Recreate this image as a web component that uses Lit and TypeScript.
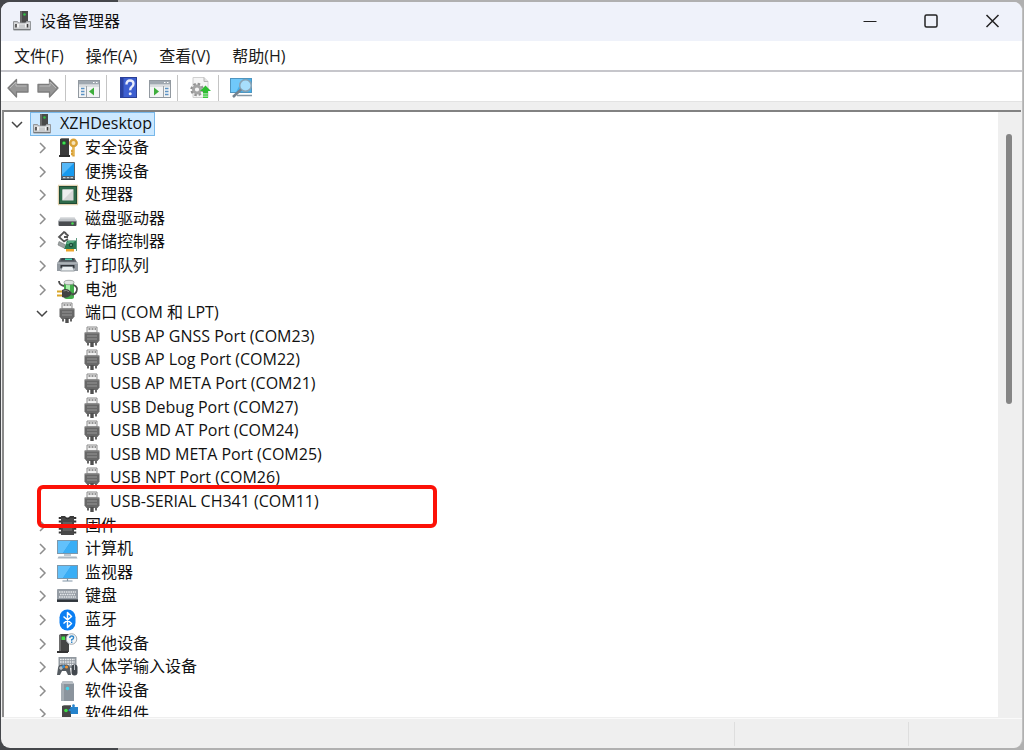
import { LitElement, html, css, svg, SVGTemplateResult } from "lit";
import { customElement, property } from "lit/decorators.js";
import { classMap } from "lit/directives/class-map.js";

const hostBox = svg`
  <rect x="8" y="0" width="8" height="12" fill="#4a4a4a"/><path d="M8 0h2v12H8z" fill="#6a6a6a"/>
  <circle cx="12.500" cy="3.500" r="1.300" fill="#2fc043"/>
  <path d="M1.500 10.500h4l1 1.500h7l1-1.500h4v8.500h-17z" fill="#c9cbcd" stroke="#94979a" stroke-width="1"/>
  <path d="M2 18.500h16" stroke="#777a7d" stroke-width="1"/>
  <path d="M2 13h16" stroke="#e6e7e8" stroke-width="1"/>
  <rect x="3.500" y="13" width="3.500" height="3.500" fill="#f4f4f4"/><rect x="13" y="13" width="3.500" height="3.500" fill="#f4f4f4"/>
  <path d="M4 13v3.500M15.500 13v3.500" stroke="#3d3d3d" stroke-width="1.600"/>`;

const monitor = svg`
  <rect x=".5" y="1.500" width="20" height="13" fill="#2f9ee6" stroke="#7d97aa" stroke-width="1"/>
  <path d="M1 2h13L6 14H1z" fill="#62c1fb"/><path d="M14 2h6v12H6z" fill="#3aaef5"/>`;

const ICONS: Record<string, SVGTemplateResult> = {
  host: hostBox,
  security: svg`
    <path d="M3 1h9v17H3z" fill="#3b3b3b"/><path d="M3 1l1.500-1H12v1z" fill="#777"/>
    <rect x="5" y="3" width="4" height="4" fill="#235c2c"/><circle cx="7" cy="5" r="1.600" fill="#3fe352"/>
    <rect x="2" y="17" width="11" height="2" fill="#2f2f2f"/>
    <circle cx="16.500" cy="5" r="3.200" fill="#f5e3b8" stroke="#d9a136" stroke-width="2.400"/>
    <path d="M16.500 8v10.500M16.500 13H14M16.500 16H14" stroke="#d9a136" stroke-width="2.400"/>
    <path d="M17 9v8" stroke="#f3d184" stroke-width=".8"/>`,
  portable: svg`
    <rect x="4" y="0" width="14" height="18" rx="1" fill="#56626d"/>
    <rect x="5" y="1" width="12" height="13" fill="#169af0"/><path d="M5 1h12L5 13z" fill="#56b8f8"/>
    <path d="M6 15.700h2.500M9.800 15.700h2.500M13.500 15.700H16" stroke="#c7ced4" stroke-width="1.200"/><path d="M4 17.500h14" stroke="#333d47"/>`,
  cpu: svg`
    <rect x="1.500" y=".5" width="19" height="19" fill="none" stroke="#c6a765" stroke-width="1.500" stroke-dasharray="1 1"/>
    <rect x="2" y="1" width="18" height="18" fill="#2f6b4a"/><rect x="2.500" y="1.500" width="17" height="17" fill="none" stroke="#204b34"/>
    <rect x="5.500" y="4.500" width="11" height="11" fill="#d7d7d7"/><path d="M5.500 15.500v-11h11z" fill="#eee"/>`,
  disk: svg`
    <path d="M4 8h13l3 4H1z" fill="#bfc3c7"/><path d="M4 8h13l1 1.500H3z" fill="#dee0e2"/>
    <rect x="1.500" y="12" width="18" height="5" rx="1" fill="#494c50"/><path d="M1.500 12.500h18" stroke="#797d82"/>
    <circle cx="15.500" cy="14.500" r="1.300" fill="#45dc4d"/>`,
  storage: svg`
    <path d="M9 1L7 0 2 5l5 4.500L11 7M8 1l3.500 3" fill="none" stroke="#555" stroke-width="1.800"/><path d="M7 5h4" stroke="#555" stroke-width="2"/>
    <path d="M10 8.500h9v8.500H7z" fill="#2b7852"/><path d="M11 9h7l-3 3H9z" fill="#58aa81"/>
    <path d="M19.500 6v13" stroke="#5e9a80"/><path d="M2 9.500l6 3-1 3.500-6-3z" fill="#9da3a3" stroke="#707676" stroke-width=".6"/>
    <path d="M9 17h8v2.500H9z" fill="#eda62b"/><circle cx="14" cy="13" r="2.200" fill="#194c38"/><circle cx="14" cy="13" r=".8" fill="#bbe1cd"/>`,
  printer: svg`
    <path d="M3.500 2h14l3 5H.5z" fill="#62686f"/><path d="M5 2h11l1.500 2.500H3.500z" fill="#3b4148"/><path d="M8 3.300h7" stroke="#42d2ab" stroke-width="1.500"/>
    <path d="M0 6.500h21v8.500h-3.500v-2h-14v2H0z" fill="#939aa1"/><path d="M0 7h21" stroke="#c7ccd0"/>
    <rect x="3.500" y="9" width="14" height="3" fill="#303439"/><path d="M5.500 10.500h10l2 4.500h-14z" fill="#e9edf0" stroke="#6d767d" stroke-width=".7"/>`,
  battery: svg`
    <rect x="7" y="2" width="10" height="17" rx="2.500" fill="#44ad4c"/><path d="M9 3.500h4V15H9z" fill="#a8eeaa"/>
    <ellipse cx="12" cy="2.500" rx="5" ry="2.200" fill="#dfe3e1" stroke="#848a87" stroke-width=".7"/>
    <path d="M2 1q0 4 5 5M16.500 5q5 2 3 6.500-1 3-5 3" fill="none" stroke="#4b4b4b" stroke-width="1.800"/>
    <path d="M5 10q4-2 7 0l3 3-2 3q-4 3-8 1z" fill="#414141"/><path d="M6.500 11q3-1.500 5.500.8" stroke="#8a8a8a" fill="none"/>
    <path d="M0 11.500h5M0 15.500h5" stroke="#d9a628" stroke-width="1.800"/>`,
  port: svg`
    <path d="M5 0h10v6H5z" fill="#f0f0f0" stroke="#8c8c8c" stroke-width="1"/><path d="M6.500 2h2M9.500 2h2M12.500 2h1.500" stroke="#777" stroke-width="1.300"/>
    <path d="M2.500 5.500h15v8L15.500 16h-11l-2-2.500z" fill="#686868"/><path d="M3 6h14" stroke="#8d8d8d"/>
    <path d="M5 9h10M5 12h10" stroke="#969696" stroke-width="1"/>
    <path d="M6 15.500v3M14 15.500v3" stroke="#656565" stroke-width="2"/><path d="M10 15v5" stroke="#505050" stroke-width="3.400"/>`,
  firmware: svg`
    <path d="M4 0h4q2.500 3 5 0h4v19H4z" fill="#484848"/><path d="M4.500 1h3q3 3.500 6 0h3" fill="none" stroke="#292929"/>
    <path d="M3 1v18M18 1v18" stroke="#343434" stroke-width="2.500" stroke-dasharray="2 1.600"/>
    <path d="M6 6h9v9H6z" fill="#606060"/>`,
  computer: svg`${monitor}<path d="M7 16h7" stroke="#8094a5"/><path d="M1.500 17.500h18l1 2H.5z" fill="#aab6c0"/>`,
  display: svg`<g transform="translate(0 1)">${monitor}<path d="M10.500 15v2M5.500 17h10" stroke="#8094a5" stroke-width="1.200"/></g>`,
  keyboard: svg`
    <rect x="0" y="3" width="21" height="13" rx="1" fill="#969da5"/><path d="M0 14.700h21" stroke="#30363c" stroke-width="2.500"/>
    <path d="M2 6h17M3 8.500h15M2 11h17" stroke="#e3e6e9" stroke-width="1.300" stroke-dasharray="1.600 .7"/>`,
  bluetooth: svg`
    <rect x="2.500" y="-.5" width="16" height="21" rx="7.800" fill="#0b7ff3"/>
    <path d="M6.500 6.500l8 7-4 4V2.500l4 4-8 7" fill="none" stroke="#fff" stroke-width="1.500" stroke-linejoin="round"/>`,
  unknown: svg`
    <path d="M2 1l2-1h8v18H2z" fill="#454545"/><path d="M2 1h2v17H2z" fill="#6b6b6b"/><rect x="4.500" y="2.500" width="3.500" height="3.500" fill="#3edd45"/>
    <path d="M0 17h11v2H0z" fill="#333"/><circle cx="14.500" cy="5" r="5.300" fill="#f4f6f8" stroke="#a3aab0"/>
    <path d="M12.800 4q0-2 1.900-2 1.900 0 1.900 1.700 0 1.200-1.900 2v1M14.700 7.600v1.300" fill="none" stroke="#2f86c8" stroke-width="1.400"/>`,
  hid: svg`
    <rect x="1.500" y="0" width="18" height="11" fill="#9299a0"/><path d="M3 2.500h15M3 5h15M3 7.500h15" stroke="#eceef0" stroke-width="1.300" stroke-dasharray="1.700 .7"/>
    <path d="M1 11q1-4 3.500-3.500h4Q12 7 13 11l1 7h-3l-2-4H5l-2 4H0z" fill="#555b61"/><path d="M4 9v4M2 11h4" stroke="#d5d8da"/>
    <circle cx="9.500" cy="10" r="1.600" fill="#eb9337"/><circle cx="6.500" cy="9.500" r="1.500" fill="#368fd3"/>
    <rect x="14.500" y="7.500" width="6" height="11" rx="3" fill="#42484e"/><path d="M17.500 8v5" stroke="#b9bfc4"/>`,
  software: svg`
    <path d="M4 3l2-3h9l2 3v17H4z" fill="#8b949d"/><path d="M4 3l2-3h9l2 3z" fill="#b8bec4"/><path d="M4 3h3v17H4z" fill="#a4acb3"/>
    <circle cx="10.500" cy="7.500" r="1.700" fill="#3fd7ee"/>`,
  component: svg`
    <path d="M5 2h9v18H5z" fill="#474747"/><path d="M5 2l2-1h7v1z" fill="#7a7a7a"/><circle cx="9" cy="6.500" r="1.800" fill="#3edd45"/>
    <path d="M13 3h2.500q-1-2.500 1-2.800 2 .3 1 2.800H21v7h-7.500V7q-2 .7-2-1 0-1.500 2-1z" fill="#2583cc"/>`,
};

interface Entry {
  label: string;
  icon: string;
  level: number;
  open?: boolean;
}

const cat = (icon: string, label: string, open = false): Entry => ({ icon, label, open, level: 1 });
const port = (label: string): Entry => ({ icon: "port", label, level: 2 });

const ENTRIES: Entry[] = [
  { icon: "host", label: "XZHDesktop", level: 0, open: true },
  cat("security", "安全设备"),
  cat("portable", "便携设备"),
  cat("cpu", "处理器"),
  cat("disk", "磁盘驱动器"),
  cat("storage", "存储控制器"),
  cat("printer", "打印队列"),
  cat("battery", "电池"),
  cat("port", "端口 (COM 和 LPT)", true),
  port("USB AP GNSS Port (COM23)"),
  port("USB AP Log Port (COM22)"),
  port("USB AP META Port (COM21)"),
  port("USB Debug Port (COM27)"),
  port("USB MD AT Port (COM24)"),
  port("USB MD META Port (COM25)"),
  port("USB NPT Port (COM26)"),
  port("USB-SERIAL CH341 (COM11)"),
  cat("firmware", "固件"),
  cat("computer", "计算机"),
  cat("display", "监视器"),
  cat("keyboard", "键盘"),
  cat("bluetooth", "蓝牙"),
  cat("unknown", "其他设备"),
  cat("hid", "人体学输入设备"),
  cat("software", "软件设备"),
  cat("component", "软件组件"),
];

@customElement("device-icon")
export class DeviceIcon extends LitElement {
  @property() name = "host";

  static styles = css`
    :host { display: block; width: 20px; height: 20px; flex: none; }
    svg { display: block; overflow: visible; }
  `;

  render() {
    return html`<svg width="20" height="20" viewBox="0 0 20 20" aria-hidden="true">${ICONS[this.name]}</svg>`;
  }
}

@customElement("tool-bar")
export class ToolBar extends LitElement {
  static styles = css`
    :host { display: flex; align-items: center; height: 29px; padding: 2px 6px 0; background: #fff; box-sizing: border-box; }
    button { display: block; width: 22px; height: 24px; padding: 0; border: 0; background: none; flex: none; }
    button + button { margin-left: 8px; }
    svg { display: block; overflow: visible; }
    .sep { width: 1px; height: 26px; margin: 0 12px 0 6px; background: #c4c4c4; flex: none; }
  `;

  private tool(label: string, art: SVGTemplateResult) {
    return html`<button type="button" aria-label=${label}><svg width="22" height="24" viewBox="0 0 22 24">${art}</svg></button>`;
  }

  private pane(flip: boolean) {
    const side = flip ? 16 : 3;
    return svg`
      <rect x=".5" y="4.500" width="21" height="17" fill="#f3f4f5" stroke="#9299a0"/>
      <rect x="1" y="5" width="20" height="3.500" fill="#a0a8b0"/><path d="M15 6.500h1.500M18 6.500h1.500" stroke="#fff"/>
      <path d="M1 10h20" stroke="#c2c7cc"/><path d="M${flip ? 14 : 8}.500 10v11" stroke="#9da4aa"/>
      <path d="M${side} 12.500h3.500M${side} 15.500h3.500M${side} 18.500h3.500" stroke="#5b92c4" stroke-width="1.400"/>
      <path d="${flip ? "M5 11.500v8l5-4z" : "M16 11.500v8l-5-4z"}" fill="#3fae3c"/>`;
  }

  render() {
    const arrow = svg`<path d="M1 12l8.500-8.500v5h11.500v7.500H9.500v5z" fill="#969696" stroke="#7d7d7d" stroke-width="1.300" stroke-linejoin="round"/><path d="M3 12l6-6v4h10.500" fill="none" stroke="#b9b9b9"/>`;
    return html`
      ${this.tool("后退", arrow)}
      ${this.tool("前进", svg`<g transform="translate(22 0) scale(-1 1)">${arrow}</g>`)}
      <span class="sep"></span>
      ${this.tool("显示/隐藏控制台树", this.pane(false))}
      <span class="sep"></span>
      ${this.tool("帮助", svg`
        <rect x="1.500" y="1.500" width="16" height="20" fill="#3d5fd0" stroke="#2b3f94"/><path d="M1 1h3.500v21H1z" fill="#2b429f"/>
        <path d="M7.500 8.500q0-4 3.500-4t3.500 3.300q0 2-1.900 3.200-1.400 1-1.400 3.200" fill="none" stroke="#e8ecfa" stroke-width="2.400"/><circle cx="11.200" cy="17.800" r="1.500" fill="#e8ecfa"/>`)}
      ${this.tool("显示/隐藏操作窗格", this.pane(true))}
      <span class="sep"></span>
      ${this.tool("扫描检测硬件改动", svg`
        <path d="M3 1.500h11l4 4v16H3z" fill="#f5f5f5" stroke="#d0d0d0"/><path d="M14 1.500v4h4" fill="#e2e2e2" stroke="#b5b5b5"/>
        <circle cx="7" cy="13.500" r="5.400" fill="none" stroke="#929292" stroke-width="2.600" stroke-dasharray="2.400 1.840"/>
        <circle cx="7" cy="13.500" r="3.500" fill="none" stroke="#a5a5a5" stroke-width="2.800"/>
        <path d="M15.500 9.500l5.500 5.500h-3v2.500h-5V15h-3z" fill="#2dbd31"/><path d="M13 19h5M13 21.300h5" stroke="#38c93b" stroke-width="1.500"/>`)}
      <span class="sep"></span>
      ${this.tool("更新驱动程序", svg`
        <rect x="-.5" y="2.500" width="21" height="14" fill="#43b1ef" stroke="#4f96c0"/><path d="M0 3h12L5 16H0z" fill="#70c9fa"/>
        <path d="M6 19.500h15" stroke="#8596a3" stroke-width="1.500"/>
        <circle cx="14.500" cy="9.500" r="5.800" fill="#a7defc" stroke="#89a3b4" stroke-width="1.500"/><path d="M10 13.500L2 21" stroke="#74828e" stroke-width="2.600"/>`)}
    `;
  }
}

@customElement("device-tree")
export class DeviceTree extends LitElement {
  static styles = css`
    :host { display: block; position: relative; overflow: hidden; background: #fff; min-width: 0; }
    ul { list-style: none; margin: 0; padding: 0 0 0 4px; }
    li { display: flex; height: 24px; }
    li:nth-child(5n + 3), li:nth-child(5n) { height: 23px; }
    .level-1 { padding-left: 25px; }
    .level-2 { padding-left: 50px; }
    .toggle { width: 18px; height: 24px; padding: 0; margin-right: 4px; border: 0; background: none; flex: none; }
    .toggle svg { display: block; margin: auto; }
    .item { display: flex; align-items: center; gap: 8px; height: 24px; box-sizing: border-box; padding: 0 2px 0 1px; border: 1px solid transparent; white-space: nowrap; line-height: 22px; color: #111; }
    .label { padding-bottom: 1px; line-height: 21px; }
    .item.selected { background: #cce8ff; border-color: #78b8ea; }
    .mark { position: absolute; left: 33px; top: 373px; width: 400px; height: 43px; box-sizing: border-box; border: 4px solid #fc1107; border-radius: 6px; }
  `;

  private toggle(e: Entry) {
    if (e.level === 2) return html`<span class="toggle"></span>`;
    const shape = e.open
      ? svg`<path d="M4 7l5 5 5-5" fill="none" stroke="#444" stroke-width="1.500"/>`
      : svg`<path d="M7 4l5 5-5 5" fill="none" stroke="#8d8d8d" stroke-width="1.500"/>`;
    return html`<button class="toggle" type="button" aria-label=${(e.open ? "折叠 " : "展开 ") + e.label}>
      <svg width="18" height="18" viewBox="0 0 18 18">${shape}</svg></button>`;
  }

  render() {
    return html`
      <ul role="tree">
        ${ENTRIES.map((e) => html`
          <li class="level-${e.level}" role="treeitem" aria-level=${e.level + 1} aria-selected=${e.level === 0}>
            ${this.toggle(e)}
            <span class=${classMap({ item: true, selected: e.level === 0 })}><device-icon name=${e.icon}></device-icon><span class="label">${e.label}</span></span>
          </li>`)}
      </ul>
      <div class="mark"></div>`;
  }
}

@customElement("app-root")
export class AppRoot extends LitElement {
  static styles = css`
    :host {
      display: flex; flex-direction: column; height: 100vh; box-sizing: border-box; padding: 2px 1px 2px 1px;
      font: 16px/22px "Open Sans", "Noto Sans CJK SC", sans-serif; color: #1b1b1b;
      background: linear-gradient(90deg, #45474b 118px, #b0b0b0 118px);
    }
    .window { flex: 1; min-height: 0; display: flex; flex-direction: column; background: #efefef; border-radius: 9px; overflow: hidden; border-right: 1px solid #c0c0c0; }
    .title { display: flex; align-items: center; height: 39px; background: #eff2fa; padding-left: 11px; flex: none; }
    .title device-icon { margin-bottom: 2px; }
    h1 { flex: 1; margin: 0 0 0 8px; padding-bottom: 2px; font-size: 16px; font-weight: 400; line-height: 22px; color: #111; }
    .title button { width: 61px; height: 39px; padding: 0 0 2px; border: 0; background: none; }
    .title svg { display: block; margin: auto; }
    .menu { display: flex; gap: 22px; height: 29px; padding: 0 13px; background: #fff; flex: none; border-bottom: 2px solid #c6c6cb; }
    .menu button { padding: 0; border: 0; background: none; font: inherit; color: inherit; }
    .strip { height: 8px; border-top: 1px solid #e3e3e3; flex: none; }
    .body { flex: 1; min-height: 0; display: grid; grid-template-columns: 1fr 23px; margin-right: 1px; border-top: 2px solid #828282; border-left: 2px solid #8b8b8b; margin-left: 1px; }
    .scroll { background: #efefef; padding-top: 22px; }
    .thumb { width: 6px; height: 270px; margin-left: 8px; border-radius: 3px; background: #858585; }
    .status { display: grid; grid-template-columns: 1fr 174px 114px; height: 29px; border-top: 1px solid #fafafa; flex: none; margin-top: 1px; }
    .status span + span { border-left: 1px solid #dedede; margin: 3px 0 2px; }
  `;

  render() {
    return html`
      <main class="window">
        <header class="title">
          <device-icon name="host"></device-icon>
          <h1>设备管理器</h1>
          <button type="button" aria-label="最小化"><svg width="16" height="16"><path d="M1.500 8.500h13" stroke="#222"/></svg></button>
          <button type="button" aria-label="最大化"><svg width="16" height="16"><rect x="2" y="2" width="12" height="12" rx="1.500" fill="none" stroke="#222" stroke-width="1.500"/></svg></button>
          <button type="button" aria-label="关闭"><svg width="16" height="16"><path d="M2.500 2l12 12M14.500 2l-12 12" stroke="#222" stroke-width="1.500"/></svg></button>
        </header>
        <nav class="menu">
          ${["文件(F)", "操作(A)", "查看(V)", "帮助(H)"].map((m) => html`<button type="button">${m}</button>`)}
        </nav>
        <tool-bar></tool-bar>
        <div class="strip"></div>
        <section class="body">
          <device-tree></device-tree>
          <div class="scroll"><div class="thumb"></div></div>
        </section>
        <footer class="status"><span></span><span></span><span></span></footer>
      </main>`;
  }
}
